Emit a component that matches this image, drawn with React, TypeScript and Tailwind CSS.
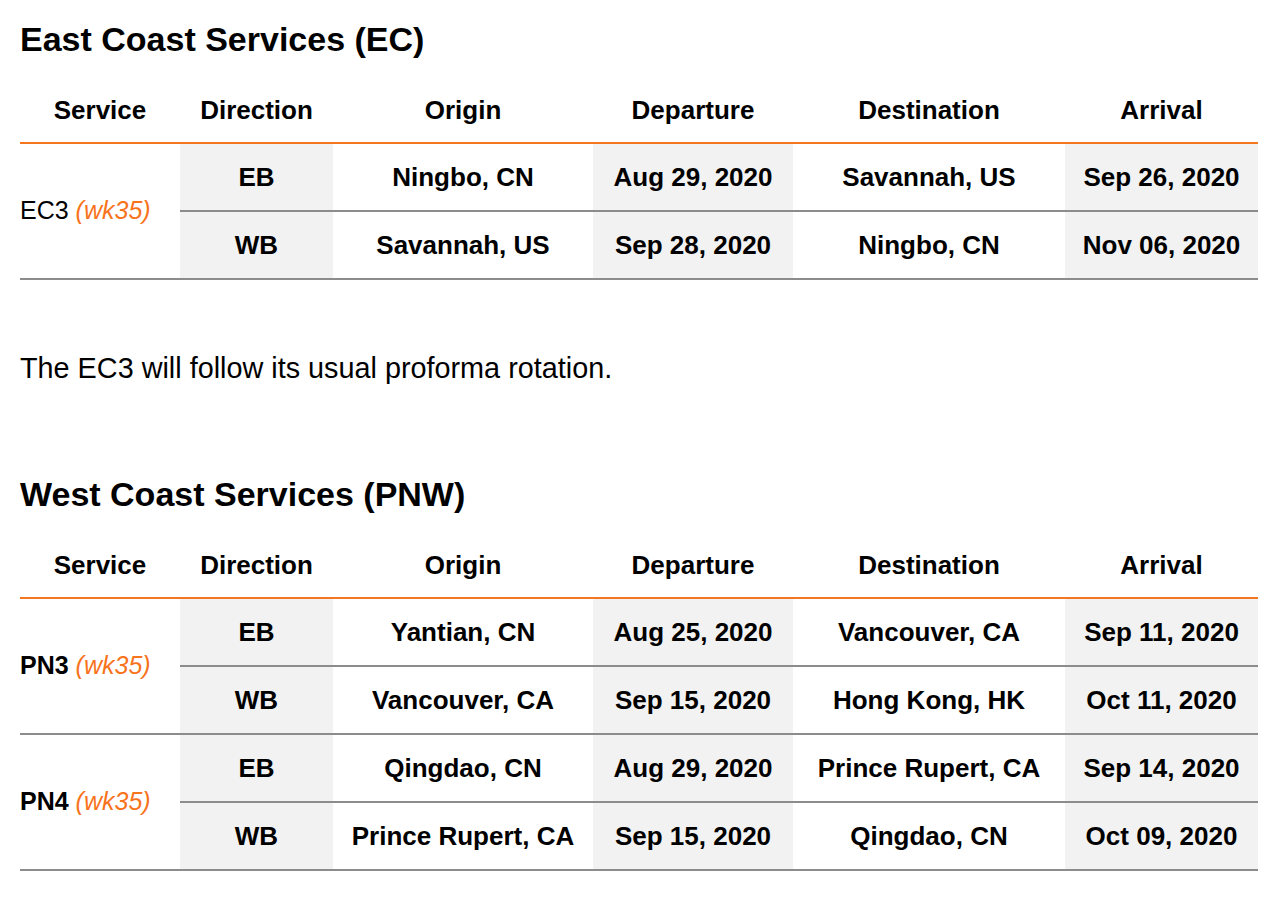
import React from "react";

type Row = { dir: string; origin: string; dep: string; dest: string; arr: string };
type Group = { service: string; bold: boolean; rows: Row[] };

const ec: Group[] = [
  {
    service: "EC3",
    bold: false,
    rows: [
      { dir: "EB", origin: "Ningbo, CN", dep: "Aug 29, 2020", dest: "Savannah, US", arr: "Sep 26, 2020" },
      { dir: "WB", origin: "Savannah, US", dep: "Sep 28, 2020", dest: "Ningbo, CN", arr: "Nov 06, 2020" },
    ],
  },
];

const pnw: Group[] = [
  {
    service: "PN3",
    bold: true,
    rows: [
      { dir: "EB", origin: "Yantian, CN", dep: "Aug 25, 2020", dest: "Vancouver, CA", arr: "Sep 11, 2020" },
      { dir: "WB", origin: "Vancouver, CA", dep: "Sep 15, 2020", dest: "Hong Kong, HK", arr: "Oct 11, 2020" },
    ],
  },
  {
    service: "PN4",
    bold: true,
    rows: [
      { dir: "EB", origin: "Qingdao, CN", dep: "Aug 29, 2020", dest: "Prince Rupert, CA", arr: "Sep 14, 2020" },
      { dir: "WB", origin: "Prince Rupert, CA", dep: "Sep 15, 2020", dest: "Qingdao, CN", arr: "Oct 09, 2020" },
    ],
  },
];

const td = "h-[68px] p-0 border-b-2 border-[#8c8c8c] text-center align-middle font-bold";

function Schedule({ groups }: { groups: Group[] }) {
  return (
    <table className="w-[1238px] border-collapse table-fixed text-[26px] text-black">
      <colgroup>
        <col className="w-[160px]" />
        <col className="w-[153px]" />
        <col className="w-[260px]" />
        <col className="w-[200px]" />
        <col className="w-[272px]" />
        <col className="w-[193px]" />
      </colgroup>
      <thead>
        <tr className="h-[63px]">
          {["Service", "Direction", "Origin", "Departure", "Destination", "Arrival"].map((h) => (
            <th key={h} className="p-0 pb-[2px] font-bold text-center align-middle border-b-2 border-[#f5761f]">
              {h}
            </th>
          ))}
        </tr>
      </thead>
      <tbody>
        {groups.map((g) =>
          g.rows.map((r, i) => (
            <tr key={g.service + i}>
              {i === 0 && (
                <td
                  rowSpan={g.rows.length}
                  className={`p-0 border-b-2 border-[#8c8c8c] text-left align-middle text-[25px] ${g.bold ? "font-bold" : "font-normal"}`}
                >
                  {g.service} <span className="italic font-normal text-[#f7731c]">(wk35)</span>
                </td>
              )}
              <td className={`${td} bg-[#f2f2f2]`}>{r.dir}</td>
              <td className={td}>{r.origin}</td>
              <td className={`${td} bg-[#f2f2f2]`}>{r.dep}</td>
              <td className={td}>{r.dest}</td>
              <td className={`${td} bg-[#f2f2f2]`}>{r.arr}</td>
            </tr>
          ))
        )}
      </tbody>
    </table>
  );
}

export default function App() {
  return (
    <div className="min-h-[906px] bg-white px-[20px] pt-[19px] font-['Liberation_Sans',Arial,sans-serif] text-black">
      <h3 className="text-[34px] leading-[40px] font-bold">East Coast Services (EC)</h3>
      <div className="mt-[21px]">
        <Schedule groups={ec} />
      </div>
      <p className="mt-[70px] text-[28.8px] leading-[36px]">The EC3 will follow its usual proforma rotation.</p>
      <h3 className="mt-[88px] text-[34px] leading-[40px] font-bold">West Coast Services (PNW)</h3>
      <div className="mt-[21px]">
        <Schedule groups={pnw} />
      </div>
    </div>
  );
}
